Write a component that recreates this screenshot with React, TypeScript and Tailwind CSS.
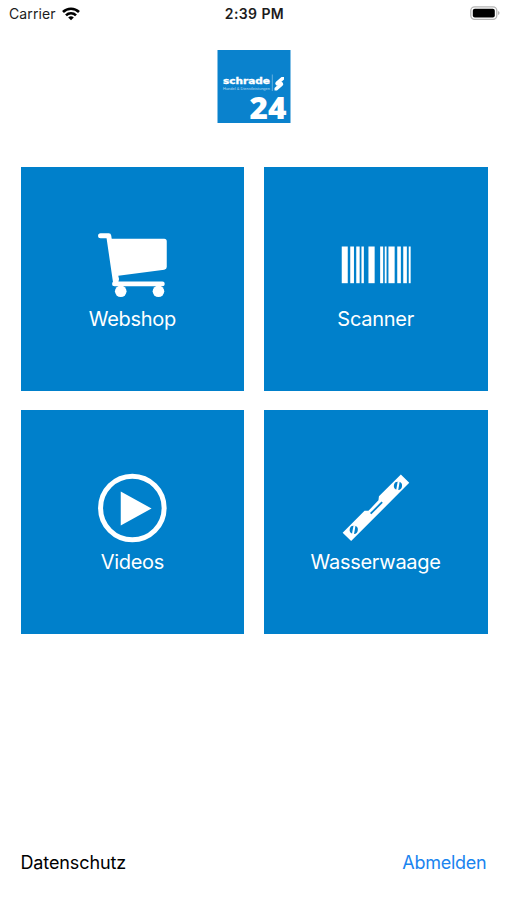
import type { ReactNode } from "react";

// Home screen: status bar, brand logo, 2x2 grid of launch tiles, footer links.

export default function App() {
  return (
    <div className="flex h-[900px] w-[507px] flex-col overflow-hidden bg-white font-['Inter','Liberation_Sans',sans-serif] text-black">
      <StatusBar />
      <header className="flex justify-center pt-[22px]">
        <Logo />
      </header>
      <main className="ml-[20.5px] mt-[44px] grid w-[467px] grid-cols-2 gap-[19.5px]">
        <Tile icon={<CartIcon />} label="Webshop" />
        <Tile icon={<BarcodeIcon />} label="Scanner" />
        <Tile icon={<PlayIcon />} label="Videos" />
        <Tile icon={<LevelIcon />} label="Wasserwaage" />
      </main>
      <footer className="mb-[25px] mt-auto flex justify-between pl-[20.5px] pr-[20.5px] text-[18px] leading-6">
        <a className="tracking-[-0.12px]">Datenschutz</a>
        <a className="tracking-[-0.25px] text-[#1a84ef]">Abmelden</a>
      </footer>
    </div>
  );
}

function StatusBar() {
  return (
    <div className="grid h-7 shrink-0 grid-cols-3 items-center pl-[9px] pr-[7px] text-[14px] leading-7 text-[#1c1c1c]">
      <div className="flex items-center gap-[6px]">
        <span className="tracking-[0.12px]">Carrier</span>
        <svg className="-mt-px" width="18" height="14" viewBox="0 0 18 14" fill="none" stroke="#000" strokeWidth="2.6">
          <path d="M1 5a11.3 11.3 0 0 1 16 0" />
          <path d="M4 8.3a7 7 0 0 1 10 0" />
          <path d="M9 13.3L6.2 10.6a4 4 0 0 1 5.6 0z" fill="#000" stroke="none" />
        </svg>
      </div>
      <span className="text-center font-semibold tracking-[0.4px]">2:39 PM</span>
      <svg className="justify-self-end" width="30" height="16" viewBox="0 0 30 16">
        <rect x="0.8" y="0.8" width="26" height="12.6" rx="3.8" fill="#fff" stroke="#b5b5b5" strokeWidth="1.3" />
        <rect x="2.8" y="2.8" width="22" height="8.6" rx="2" fill="#000" />
        <path d="M28.2 5.1a2.2 2.2 0 0 1 0 4z" fill="#a5a5a5" />
      </svg>
    </div>
  );
}

function Logo() {
  return (
    <svg className="overflow-visible" width="74" height="73" viewBox="0 0 74 73" role="img" aria-label="schrade 24">
      <rect x="0.5" width="73" height="73" fill="#0a82cd" />
      <text x="6" y="34.3" fontSize="9" fontWeight="700" textLength="47" lengthAdjust="spacingAndGlyphs" fill="#fff" stroke="#fff" strokeWidth="0.35" className="font-['DejaVu_Sans',sans-serif]">
        schrade
      </text>
      <text x="6" y="40" fontSize="4" textLength="47" lengthAdjust="spacingAndGlyphs" fill="#b5daf1" className="font-['Liberation_Sans',sans-serif]">
        Handel &amp; Dienstleistungen
      </text>
      <path d="M55.3 24.5V41" stroke="#8cc5e8" strokeWidth="0.7" />
      {/* two interlocking hooks, the lower one is the upper turned by 180° */}
      <path d="M67 27H64.5L59 31.8Q57.6 33.2 58.6 34.6L59.4 35.4H64.2L62.6 33.4L67 29.5Z" fill="#fff" />
      <path d="M57.5 40.5H60L65.5 35.7Q66.9 34.3 65.900 32.9L65.100 32.100H60.3L61.9 34.1L57.5 38Z" fill="#fff" />
      <text x="32.5" y="68.8" fontSize="30.5" fontWeight="800" textLength="37" lengthAdjust="spacingAndGlyphs" fill="#fff" className="font-['Open_Sans',sans-serif]">
        24
      </text>
    </svg>
  );
}

function Tile({ icon, label }: { icon: ReactNode; label: string }) {
  return (
    <button className="flex h-[223.5px] flex-col items-center bg-[#0080cb] pt-[62.5px] text-white">
      {icon}
      <span className="mt-[5.5px] text-[20px] leading-7 tracking-[-0.28px]">{label}</span>
    </button>
  );
}

function CartIcon() {
  return (
    <svg width="70" height="70" viewBox="97.25 229.5 70 70" fill="#fff">
      <path d="M100.8 235.3H109L115.8 282" fill="none" stroke="#fff" strokeWidth="5" strokeLinecap="round" strokeLinejoin="round" />
      <path d="M110 238.3H164.5Q167 238.3 167 240.8V266.5Q167 268.8 164.5 269.2L118.5 275.3L119.3 278.5L118.5 282H114Z" />
      <rect x="112.3" y="281" width="52.7" height="4.8" rx="2.4" />
      <circle cx="121" cy="290.8" r="5.8" />
      <circle cx="158.7" cy="290.8" r="5.8" />
    </svg>
  );
}

// [x, width] of each bar
const BARS = [
  [341.5, 6],
  [350, 3.7],
  [356, 3.4],
  [361.2, 2.4],
  [368.2, 6.2],
  [379.9, 3],
  [384.5, 1.8],
  [388.2, 6.2],
  [397, 3.6],
  [403, 3.6],
  [408.5, 1.9],
];

function BarcodeIcon() {
  return (
    <svg width="70" height="70" viewBox="340.75 229.5 70 70" fill="#fff">
      {BARS.map(([x, w]) => (
        <rect key={x} x={x} y="246" width={w} height="36.7" />
      ))}
    </svg>
  );
}

function PlayIcon() {
  return (
    <svg width="70" height="70" viewBox="97.25 472.5 70 70">
      <circle cx="132.6" cy="507.5" r="31.8" fill="none" stroke="#fff" strokeWidth="5" />
      <path d="M121 491L151.8 508L121 525Z" fill="#fff" />
    </svg>
  );
}

function LevelIcon() {
  return (
    <svg width="70" height="70" viewBox="340.75 472.5 70 70">
      <path
        d="M400.6 474L409 482.3L350.9 540.6L342.4 532.2L364.3 510.3H368.2L378.2 499.7L378.7 495.8Z"
        fill="#fff"
      />
      <path d="M370.4 513.2L381.9 501.7" stroke="#0080cb" strokeWidth="1.8" />
      <Vial cx={397.7} cy={485.3} />
      <Vial cx={353.5} cy={529.3} />
    </svg>
  );
}

function Vial({ cx, cy }: { cx: number; cy: number }) {
  return (
    <g transform={`rotate(10 ${cx} ${cy})`}>
      <circle cx={cx} cy={cy} r="4.1" fill="#0080cb" />
      <rect x={cx - 1} y={cy - 4.5} width="2" height="9" fill="#fff" />
    </g>
  );
}
